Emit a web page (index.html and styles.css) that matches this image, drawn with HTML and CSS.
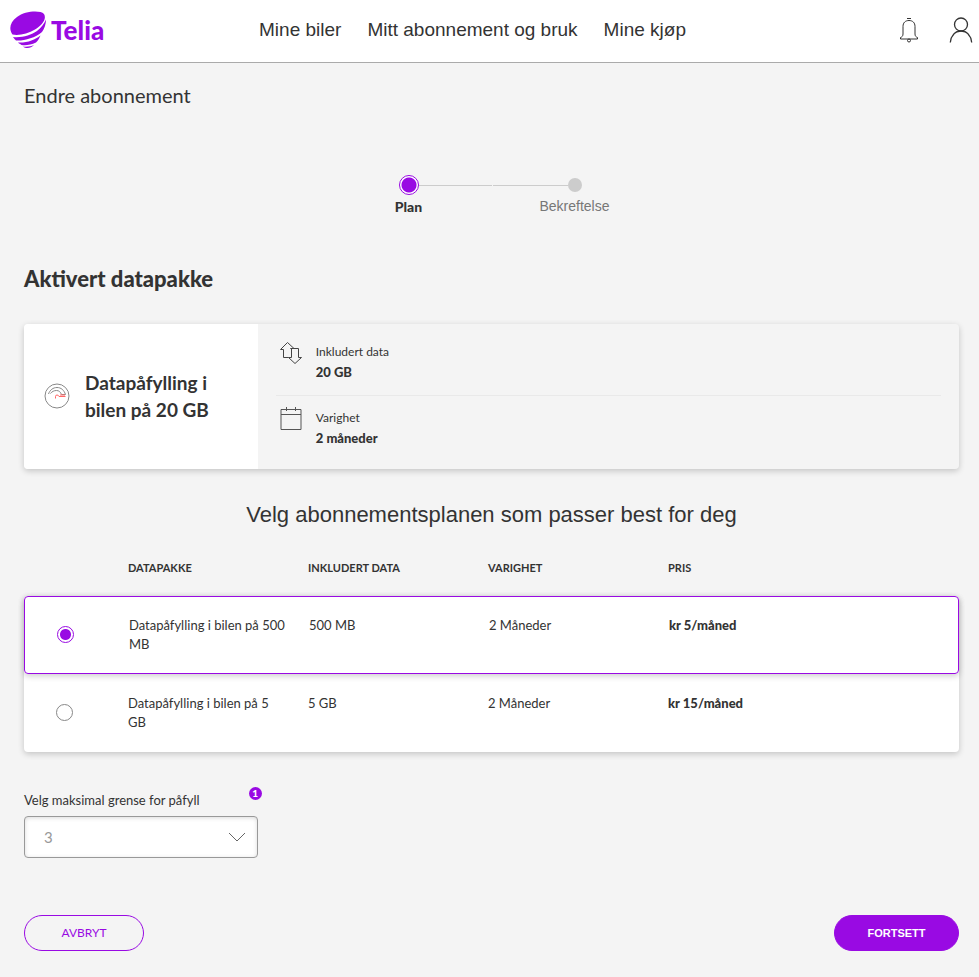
FILE: index.html
```html
<!DOCTYPE html>
<html lang="no">
<head>
<meta charset="utf-8">
<meta name="viewport" content="width=device-width, initial-scale=1">
<title>Endre abonnement</title>
<link rel="stylesheet" href="styles.css">
</head>
<body>
<header class="site-header">
  <a class="logo" href="#">
    <svg width="37" height="38" viewBox="0 0 37 38" aria-hidden="true" fill="#990ae3">
      <path d="M2.500 23.500C-1.500 18 0 11 7 6 15 0 30-1 34 3 37 8 32 14 25 18.500 18 22.500 9 25 2.500 23.500Z"/>
      <path d="M3 26C12 27 21 24 27 20 31 17 34 13 36 8.500 36 13 34.500 17.500 32 21 25 27 14 30 6 29.500 5 28.500 4 27.500 3 26Z"/>
      <path d="M8 31.500C17 32 25 29 30.500 24.500 29.500 27 28 29.500 26 31.500 21 34 16 34.500 11.500 34 10 33 9 32.500 8 31.500Z"/>
      <path d="M13 35.500C17 36 21 35.500 24 34 21 37.500 16 38 13 35.500Z"/>
    </svg>
    <span class="logo-text">Telia</span>
  </a>
  <nav class="main-nav">
    <a href="#">Mine biler</a>
    <a href="#">Mitt abonnement og bruk</a>
    <a href="#">Mine kjøp</a>
  </nav>
  <div class="header-actions">
    <button class="icon-button" type="button" aria-label="Varsler">
      <svg width="20" height="26" viewBox="0 0 20 26" fill="none" stroke="#333" stroke-width="1">
        <path d="M8 1.500h4M4 17V9.500C4 5.500 6.500 3.500 10 3.500S16 5.500 16 9.500V17c0 2 1 3 2.500 3.500V22H1.500v-1.500C3 20 4 19 4 17Z"/>
        <circle cx="10" cy="23.500" r="1.500"/>
      </svg>
    </button>
    <button class="icon-button" type="button" aria-label="Min profil">
      <svg width="24" height="26" viewBox="0 0 24 26" fill="none" stroke="#333" stroke-width="1.300">
        <circle cx="12" cy="7.500" r="6.500"/>
        <path d="M1.300 25.500C2 18.500 6 14 12 14s10 4.500 10.700 11.500"/>
      </svg>
    </button>
  </div>
</header>

<main class="page">
  <h1 class="page-title">Endre abonnement</h1>

  <ol class="stepper">
    <li class="step step-active" aria-current="step">
      <div class="step-track"><span class="step-line step-line-none"></span><span class="step-dot"></span><span class="step-line"></span></div>
      <span class="step-label">Plan</span>
    </li>
    <li class="step">
      <div class="step-track"><span class="step-line"></span><span class="step-dot"></span><span class="step-line step-line-none"></span></div>
      <span class="step-label">Bekreftelse</span>
    </li>
  </ol>

  <h2 class="section-title">Aktivert datapakke</h2>

  <section class="package">
    <div class="package-name">
      <svg class="package-icon" width="26" height="26" viewBox="0 0 26 26" fill="none" stroke="#888">
        <circle cx="13" cy="13" r="12"/>
        <path d="M4.500 11C6 7 9 4.500 13 4.500S20 7 21.500 11.500H17.500C16.500 9 15 7.500 12.500 7.500 10 7.500 8 8.500 6.500 10.500"/>
        <path stroke="#f66" d="M11.500 15.500v-2q0-1.500 1.500-1.500t2 1.500h6.500M16 12h5"/>
      </svg>
      <h3 class="package-title">Datapåfylling i bilen på 20 GB</h3>
    </div>
    <dl class="package-facts">
      <div class="fact">
        <svg width="22" height="22" viewBox="0 0 22 22" fill="none" stroke="#444">
          <path d="M10.500 6.500H14L7.500.500.500 7.500h3v8h5"/>
          <path d="M10.500 6.500h8v9h3l-6.500 6-6.500-6h3v-9"/>
        </svg>
        <div>
          <dt>Inkludert data</dt>
          <dd>20 GB</dd>
        </div>
      </div>
      <div class="fact">
        <svg width="22" height="22" viewBox="0 0 22 22" fill="none" stroke="#555">
          <path d="M1 1.500h20v20H1ZM1 6.500h20M6.500 -1v4M15.500 -1v4"/>
        </svg>
        <div>
          <dt>Varighet</dt>
          <dd>2 måneder</dd>
        </div>
      </div>
    </dl>
  </section>

  <form>
    <h2 class="plans-title" id="plans-title">Velg abonnementsplanen som passer best for deg</h2>
    <table class="plans" aria-labelledby="plans-title">
      <thead>
        <tr><td></td><th scope="col">DATAPAKKE</th><th scope="col">INKLUDERT DATA</th><th scope="col">VARIGHET</th><th scope="col">PRIS</th></tr>
      </thead>
      <tbody>
        <tr class="plan plan-selected">
          <td class="plan-choice"><input type="radio" name="plan" id="plan-500" checked></td>
          <td><label for="plan-500">Datapåfylling i bilen på 500 MB</label></td>
          <td>500 MB</td>
          <td>2 Måneder</td>
          <td class="price">kr 5/måned</td>
        </tr>
        <tr class="plan">
          <td class="plan-choice"><input type="radio" name="plan" id="plan-5"></td>
          <td><label for="plan-5">Datapåfylling i bilen på 5 GB</label></td>
          <td>5 GB</td>
          <td>2 Måneder</td>
          <td class="price">kr 15/måned</td>
        </tr>
      </tbody>
    </table>

    <div class="limit">
      <label for="limit">Velg maksimal grense for påfyll</label>
      <span class="info-badge">1</span>
      <div class="select-box">
        <select id="limit"><option>3</option></select>
        <svg class="chevron" width="18" height="10" viewBox="0 0 18 10" fill="none" stroke="#666" aria-hidden="true"><path d="M1 1l8 8 8-8"/></svg>
      </div>
    </div>

    <div class="actions">
      <button class="button button-outline" type="button">AVBRYT</button>
      <button class="button button-primary" type="submit">FORTSETT</button>
    </div>
  </form>
</main>
</body>
</html>
```
FILE: styles.css
```css
:root {
  --purple: #990ae3;
  --text: #333;
  --sans: "Liberation Sans", Arial, sans-serif;
  --brand: Lato, "Noto Sans", sans-serif;
}

* { box-sizing: border-box; }

body {
  margin: 0;
  background: #f4f4f4;
  color: var(--text);
  font: 13px/20px var(--brand);
}

h1, h2, h3, ol, dl, dd { margin: 0; padding: 0; }

.site-header {
  display: grid;
  grid-template-columns: 1fr auto 1fr;
  align-items: center;
  min-height: 63px;
  padding: 0 6px 3px 10px;
  background: #fff;
  border-bottom: 1px solid #aaa;
}

.logo {
  display: flex;
  align-items: center;
  gap: 4px;
  color: var(--purple);
  text-decoration: none;
}

.logo-text { font: 900 26px/32px var(--brand); }

.main-nav {
  display: flex;
  gap: 26px;
  padding-right: 38px;
  font: 19px/28px var(--sans);
}

.main-nav a { color: var(--text); text-decoration: none; }

.header-actions {
  display: flex;
  justify-content: flex-end;
  align-items: center;
  gap: 30px;
}

.icon-button {
  display: flex;
  padding: 0;
  border: 0;
  background: none;
}

.page { padding: 18px 20px 26px 24px; }

.page-title { font: 400 20px/28px var(--brand); }

.stepper {
  display: grid;
  grid-template-columns: 166px 166px;
  justify-content: center;
  margin-top: 66px;
  list-style: none;
  text-align: center;
}

.step-track { display: flex; align-items: center; height: 20px; }
.step-line { flex: 1; height: 1px; background: #ccc; }
.step-line-none { background: none; }
.step + .step .step-line:first-child { margin-left: 1px; }
.step-dot { width: 14px; height: 14px; border-radius: 50%; background: #ccc; }
.step-label { display: block; font: 14px/22px var(--sans); color: #777; }

.step-active .step-dot {
  width: 20px;
  height: 20px;
  border: 1px solid var(--purple);
  background: radial-gradient(circle, var(--purple) 7px, #fff 8px);
}

.step-active .step-label { font: 900 14px/24px var(--brand); color: var(--text); }

.section-title { margin-top: 46px; font: 900 22px/28px var(--brand); }

.package {
  display: grid;
  grid-template-columns: 1fr 3fr;
  margin-top: 31px;
  border-radius: 4px;
  box-shadow: 0 2px 6px rgba(0, 0, 0, 0.2);
}

.package-name {
  display: flex;
  align-items: center;
  gap: 15px;
  padding: 0 20px 2px;
  background: #fff;
  border-radius: 4px 0 0 4px;
}

.package-icon { flex: none; }
.package-title { font: 700 19px/27px var(--brand); }
.package-facts { padding: 6px 18px 8px; }
.fact { display: flex; gap: 14px; padding: 12px 4px 13px; }
.fact + .fact { border-top: 1px solid #e9e9e9; }
.fact svg { overflow: visible; }
.fact dt { font-size: 12px; }
.fact dd { font-weight: 900; }

.plans-title { margin-top: 32px; font: 400 22px/28px var(--sans); text-align: center; }

.plans { display: block; margin-top: 29px; }
.plans thead, .plans tbody { display: block; }
.plans tr { display: grid; grid-template-columns: 104px 180px 180px 180px 1fr; }
.plans th, .plans td { padding: 0; text-align: left; }
.plans th { font: 700 11px/20px var(--brand); padding-bottom: 18px; }
.plans tbody { border-radius: 4px; box-shadow: 0 2px 6px rgba(0, 0, 0, 0.2); background: #fff; }

.plan { min-height: 78px; border-radius: 4px; line-height: 19px; }
.plans .plan td { padding: 20px 24px 20px 0; }
.plan label { display: block; }

.plan-selected {
  border: 1px solid var(--purple);
  box-shadow: 0 2px 6px rgba(0, 0, 0, 0.2);
}

.plans .plan-selected td { padding: 19px 24px 19px 0; }
.plans .plan .plan-choice { display: flex; align-items: center; padding: 0 0 2px 32px; }
.plan .price { font-weight: 900; }

.plan-choice input {
  appearance: none;
  width: 17px;
  height: 17px;
  margin: 0;
  border: 1px solid #888;
  border-radius: 50%;
  background: #fff;
}

.plan-choice input:checked {
  border-color: var(--purple);
  background: radial-gradient(circle, var(--purple) 5px, #fff 6px);
}

.limit { position: relative; width: 25%; margin-top: 38px; }
.limit label { display: block; }

.info-badge {
  position: absolute;
  top: -3px;
  right: -4px;
  width: 13px;
  height: 13px;
  border-radius: 50%;
  background: var(--purple);
  color: #fff;
  font: 900 10px/13px var(--brand);
  text-align: center;
}

.select-box { position: relative; margin-top: 6px; }

.select-box select {
  display: block;
  appearance: none;
  width: 100%;
  height: 42px;
  padding: 0 40px 0 19px;
  border: 1px solid #999;
  border-radius: 4px;
  background: #fff;
  box-shadow: inset 0 1px 4px rgba(0, 0, 0, 0.15);
  color: #999;
  font: 15px/20px var(--brand);
}

.chevron { position: absolute; top: 16px; right: 12px; pointer-events: none; }

.actions { display: flex; justify-content: space-between; margin-top: 57px; }

.button {
  height: 36px;
  padding: 0 32px;
  border: 1px solid var(--purple);
  border-radius: 18px;
  font: 12px/20px var(--brand);
}

.button-outline { min-width: 120px; background: none; color: var(--purple); }
.button-primary { min-width: 125px; background: var(--purple); color: #fff; font: 700 11px/20px var(--sans); }
```
